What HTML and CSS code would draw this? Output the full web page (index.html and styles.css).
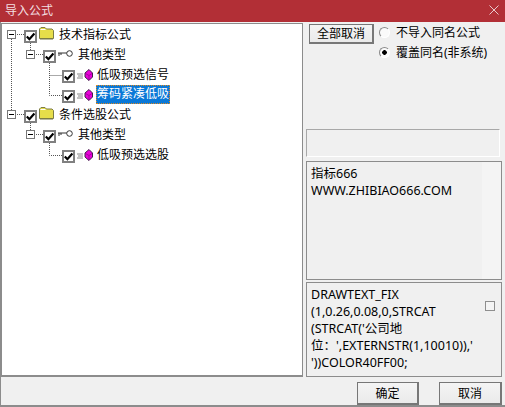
FILE: index.html
```html
<!DOCTYPE html>
<html lang="zh">
<head>
<meta charset="utf-8">
<title>导入公式</title>
<link rel="stylesheet" href="styles.css">
</head>
<body>
<svg width="0" height="0" class="defs">
  <symbol id="check" viewBox="0 0 9 9"><path d="M.8 4.4 L3.4 7.2 L8.4 1.4" fill="none" stroke="#000" stroke-width="2.2"/></symbol>
  <symbol id="folder" viewBox="0 0 15 14"><path d="M.5 12.5 V3 L2 1.5 H6 L7.5 3 H13 L14.5 4.5 V12.5 Z" fill="#e6dd4a" stroke="#7c7c44"/><path d="M1.5 3.5 H6.5" stroke="#fff" fill="none"/><path d="M1 13.5 H14" stroke="#b8b8a0" fill="none"/></symbol>
  <symbol id="key" viewBox="0 0 15 8"><path d="M0 3 H9 M1 3 V6 M3 3 V5" fill="none" stroke="#333" stroke-width="1"/><circle cx="11.5" cy="3.5" r="2.8" fill="#fff" stroke="#333"/></symbol>
  <symbol id="gem" viewBox="0 0 16 12"><path d="M0 5 H6 M1 7 H6 M0 9 H6" stroke="#888" fill="none"/><path d="M12 .5 L15.5 4 V8 L12 11.5 L8 8 V4 Z" fill="#ea00da" stroke="#40204a"/><path d="M8.5 4.5 L12 6.5 L15 4.5 M12 6.5 V11" stroke="#8a0088" stroke-width=".7" fill="none"/></symbol>
</svg>
<div class="window">
  <header class="titlebar">
    <span class="title">导入公式</span>
    <svg class="close" width="10" height="10" viewBox="0 0 10 10"><path d="M.5 .5 L9.5 9.5 M9.5 .5 L.5 9.5" stroke="#e8c8ca" fill="none"/></svg>
  </header>
  <main class="content">
    <section class="tree">
      <svg class="lines" width="80" height="140" viewBox="0 0 80 140">
        <path d="M8.5 13 V84 M14 8.5 H21 M14 88.5 H21 M27.5 17 V24 M33 28.5 H40 M46.5 37 V69.5 H59 M46.5 49.5 H59 M27.5 97 V104 M33 108.5 H40 M46.5 117 V129.5 H59" fill="none" stroke="#555" stroke-dasharray="1 1"/>
      </svg>
      <div class="row">
        <span class="expander"></span><span class="cb"><svg width="9" height="9"><use href="#check"/></svg></span>
        <svg class="icon icon-folder" width="15" height="14"><use href="#folder"/></svg><span class="label">技术指标公式</span>
      </div>
      <div class="row l1">
        <span class="expander"></span><span class="cb"><svg width="9" height="9"><use href="#check"/></svg></span>
        <svg class="icon icon-key" width="15" height="8"><use href="#key"/></svg><span class="label">其他类型</span>
      </div>
      <div class="row l2">
        <span class="cb"><svg width="9" height="9"><use href="#check"/></svg></span>
        <svg class="icon icon-gem" width="16" height="12"><use href="#gem"/></svg><span class="label">低吸预选信号</span>
      </div>
      <div class="row l2">
        <span class="cb"><svg width="9" height="9"><use href="#check"/></svg></span>
        <svg class="icon icon-gem" width="16" height="12"><use href="#gem"/></svg><span class="label selected">筹码紧凑低吸</span>
      </div>
      <div class="row">
        <span class="expander"></span><span class="cb"><svg width="9" height="9"><use href="#check"/></svg></span>
        <svg class="icon icon-folder" width="15" height="14"><use href="#folder"/></svg><span class="label">条件选股公式</span>
      </div>
      <div class="row l1">
        <span class="expander"></span><span class="cb"><svg width="9" height="9"><use href="#check"/></svg></span>
        <svg class="icon icon-key" width="15" height="8"><use href="#key"/></svg><span class="label">其他类型</span>
      </div>
      <div class="row l2">
        <span class="cb"><svg width="9" height="9"><use href="#check"/></svg></span>
        <svg class="icon icon-gem" width="16" height="12"><use href="#gem"/></svg><span class="label">低吸预选选股</span>
      </div>
    </section>
    <aside class="side">
      <div class="options">
        <button class="btn btn-all">全部取消</button>
        <div class="radios">
          <div class="radio-row"><span class="radio"></span>不导入同名公式</div>
          <div class="radio-row"><span class="radio on"></span>覆盖同名(非系统)</div>
        </div>
      </div>
      <div class="empty-box"></div>
      <div class="info-box">指标666<br>WWW.ZHIBIAO666.COM</div>
      <div class="code-box">
        <div class="code-text">DRAWTEXT_FIX<br>(1,0.26,0.08,0,STRCAT<br>(STRCAT('公司地<br>位：',EXTERNSTR(1,10010)),'<br>'))COLOR40FF00;</div>
        <span class="small-check"></span>
      </div>
    </aside>
  </main>
  <footer class="actions">
    <button class="btn btn-ok">确定</button>
    <button class="btn btn-cancel">取消</button>
  </footer>
</div>
</body>
</html>
```
FILE: styles.css
```css
* { box-sizing: border-box; }
html, body { margin: 0; padding: 0; }
body {
  width: 505px;
  height: 407px;
  overflow: hidden;
  background: #f0f0f0;
  color: #000;
  font: 12px/17px "Noto Sans", "Noto Sans CJK SC", sans-serif;
}
.defs { position: absolute; }
.window {
  width: 505px;
  height: 407px;
  display: flex;
  flex-direction: column;
  border-left: 1px solid #8c8c8c;
  border-bottom: 2px solid #8c8c8c;
}
.titlebar {
  flex: 0 0 22px;
  margin-left: -1px;
  display: flex;
  align-items: center;
  justify-content: space-between;
  padding: 0 6px 2px 5px;
  background: #b22f36;
  color: #f3dfe0;
  font-size: 12px;
}
.content {
  flex: 0 0 355px;
  display: flex;
  gap: 2px;
}
.tree {
  position: relative;
  flex: 0 0 302px;
  margin-top: 1px;
  padding: 2px 0 0 3px;
  background: #fff;
  border: 1px solid #8c8c8c;
  border-width: 1px 1px 2px 1px;
}
.lines { position: absolute; left: 1px; top: 2px; }
.row {
  display: flex;
  align-items: flex-start;
  height: 20px;
  padding-left: 19px;
  position: relative;
}
.row.l1 { padding-left: 38px; }
.row.l2 { padding-left: 57px; }
.expander {
  position: absolute;
  margin-left: -17px;
  width: 9px;
  height: 9px;
  background: linear-gradient(#000, #000) center / 5px 1px no-repeat #fff;
  border: 1px solid #777;
  top: 4px;
}
.cb {
  flex: 0 0 13px;
  height: 13px;
  margin-top: 4px;
  display: flex;
  align-items: center;
  justify-content: center;
  background: #fff;
  border: 2px solid #808080;
  position: relative;
}
.icon { flex: none; margin: 0 4px 0 2px; position: relative; }
.icon-key { margin-top: 4px; }
.icon-gem { margin: 3px 3px 0 2px; }
.label { padding: 0 1px; white-space: nowrap; }
.selected {
  background: #0a78d7;
  color: #fff;
  outline: 1px dotted #e08a20;
  outline-offset: -1px;
  margin-top: -1px;
  line-height: 18px;
  padding-bottom: 1px;
}
.side {
  flex: 1;
  display: flex;
  flex-direction: column;
  min-width: 0;
  padding: 0 3px 0 1px;
}
.options {
  flex: 0 0 107px;
  display: flex;
  align-items: flex-start;
  gap: 5px;
  padding: 2px 0 0 3px;
}
.btn {
  font: inherit;
  color: #000;
  padding: 0;
  background: linear-gradient(#f4f4f4, #eaeaea);
  border: 2px solid #777;
  border-width: 1px 2px 2px 1px;
}
.btn-all { width: 65px; height: 20px; }
.radios { display: flex; flex-direction: column; gap: 2px; margin-top: -1px; }
.radio-row { display: flex; align-items: center; gap: 6px; height: 18px; }
.radio {
  width: 11px;
  height: 11px;
  border-radius: 50%;
  border: 1px solid #8a8a8a;
  border-right-color: #fff;
  border-bottom-color: #fff;
  background: #fafafa;
}
.radio.on { background: radial-gradient(circle, #000 0 2px, #fafafa 2.6px); }
.empty-box {
  flex: 0 0 28px;
  margin-right: 2px;
  border: 1px solid #a8a8a8;
  border-right-color: #fff;
  border-bottom-color: #fff;
}
.info-box, .code-box {
  font-size: 12.5px;
  padding: 3px 4px 2px;
  border: 1px solid #8c8c8c;
}
.info-box {
  flex: 0 0 119px;
  margin-top: 4px;
  background: linear-gradient(90deg, #f0f0f0 90%, #f4f4f4 90%);
}
.code-box {
  flex: 1;
  margin-top: 2px;
  position: relative;
  background: #f0f0f0;
}
.small-check {
  position: absolute;
  right: 6px;
  top: 18px;
  width: 10px;
  height: 10px;
  border: 1px solid #8e8e8e;
  background: #f4f4f4;
}
.actions {
  flex: 1;
  display: flex;
  align-items: flex-end;
  justify-content: flex-end;
  gap: 20px;
  padding-right: 3px;
}
.btn-ok { width: 62px; height: 23px; }
.btn-cancel { width: 63px; height: 23px; }
```
